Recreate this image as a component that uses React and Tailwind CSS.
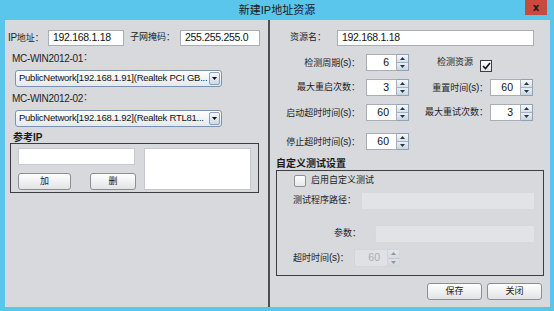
import React from "react";

const FONT = "font-['Liberation_Sans','Noto_Sans_CJK_SC',sans-serif]";

function Up() {
  return (
    <svg width="5" height="3" viewBox="0 0 5 3">
      <path d="M0 3 L2.5 0 L5 3 Z" fill="#2b3440" />
    </svg>
  );
}
function Down({ color = "#2b3440" }) {
  return (
    <svg width="5" height="3" viewBox="0 0 5 3">
      <path d="M0 0 L5 0 L2.5 3 Z" fill={color} />
    </svg>
  );
}

function Input({ className, value, disabled }) {
  return (
    <div
      className={
        "h-full flex items-center pl-[4px] text-[10.5px] tracking-[-0.3px] text-[#111] " +
        (disabled
          ? "bg-[#e1e3e6] border border-[#d6d9dc] "
          : "bg-white border border-[#a7aeb6] ") +
        className
      }
    >
      {value}
    </div>
  );
}

function Spinner({ className, value, disabled }) {
  return (
    <div className={"flex h-[17px] " + className}>
      <div
        className={
          "flex-1 flex items-center justify-end pr-[7px] text-[10.5px] " +
          (disabled
            ? "bg-[#dfe1e4] border border-[#d3d6d9] text-[#a9abae]"
            : "bg-white border border-[#a7aeb6] text-[#111]")
        }
      >
        {value}
      </div>
      <div
        className={
          "w-[12px] flex flex-col border border-l-0 " +
          (disabled ? "border-[#cfd3d7] opacity-40" : "border-[#8ea1b6]")
        }
      >
        <div className="flex-1 flex items-center justify-center bg-gradient-to-b from-[#f6f9fc] to-[#d6e0eb] border-b border-[#a3b3c5]">
          <Up />
        </div>
        <div className="flex-1 flex items-center justify-center bg-gradient-to-b from-[#e9eff6] to-[#c9d6e4]">
          <Down />
        </div>
      </div>
    </div>
  );
}

function Select({ text }) {
  return (
    <div className="ml-[10px] w-[207px] h-[17px] rounded-[3px] border border-[#7c93ad] bg-gradient-to-b from-white to-[#e3e9f0] flex items-center justify-between">
      <span className="pl-[3px] text-[9.5px] tracking-[-0.25px] text-[#111] whitespace-nowrap">
        {text}
      </span>
      <div className="shrink-0 mr-[1px] w-[11px] h-[13px] rounded-[2px] border border-[#8ca0b7] bg-gradient-to-b from-[#f3f6fa] to-[#cfdae6] flex items-center justify-center">
        <Down color="#111" />
      </div>
    </div>
  );
}

function Btn({ className, children }) {
  return (
    <div
      className={
        "h-[17px] rounded-[3px] border border-[#8d8f92] bg-gradient-to-b from-white to-[#e2e3e5] flex items-center justify-center text-[9px] text-[#222] " +
        className
      }
    >
      {children}
    </div>
  );
}

const L = "text-[9px] text-[#1e1e1e] whitespace-nowrap";
const S = ({ children }) => (
  <span className="text-[10px] tracking-[-0.3px]">{children}</span>
);

export default function App() {
  return (
    <div className={"w-[554px] h-[311px] bg-[#5bc6ec] flex flex-col overflow-hidden " + FONT}>
      <div className="h-[20px] relative flex items-center justify-center">
        <span className="text-[11px] text-[#1a1a1a] mt-[1px]">
          新建<span className="text-[11px]">IP</span>地址资源
        </span>
        <div className="absolute right-[7px] top-0 w-[22px] h-[15px] bg-[#c9493f] flex items-center justify-center">
          <span className="text-[10px] font-bold text-[#1b1b1b] leading-none font-['DejaVu_Sans',sans-serif]">x</span>
        </div>
      </div>

      <div className="flex-1 ml-[5px] mr-[4px] mb-[4px] flex bg-[#d7d9dc]">
        {/* left panel */}
        <div className="w-[265px] border-r-2 border-[#4c4e51] pt-[10px] flex flex-col">
          <div className="flex items-center h-[16px]">
            <span className={"ml-[3px] w-[40px] " + L}>
              <S>IP</S>地址：
            </span>
            <Input className="w-[76px]" value="192.168.1.18" />
            <span className={"ml-[6px] w-[50px] " + L}>子网掩码：</span>
            <Input className="w-[80px]" value="255.255.255.0" />
          </div>
          <div className="mt-[6px] h-[12px] ml-[7px] flex items-center text-[10px] tracking-[-0.3px] text-[#1e1e1e]">
            MC-WIN2012-01<span className="text-[9px]">：</span>
          </div>
          <div className="mt-[6px]">
            <Select text="PublicNetwork[192.168.1.91](Realtek PCI GB..." />
          </div>
          <div className="mt-[5px] h-[12px] ml-[7px] flex items-center text-[10px] tracking-[-0.3px] text-[#1e1e1e]">
            MC-WIN2012-02<span className="text-[9px]">：</span>
          </div>
          <div className="mt-[6px]">
            <Select text="PublicNetwork[192.168.1.92](Realtek RTL81..." />
          </div>
          <div className="mt-[4px] h-[12px] ml-[8px] flex items-center text-[10px] font-bold text-[#1a1a1a]">
            参考<span className="text-[10px]">IP</span>
          </div>
          <div className="ml-[5px] w-[249px] h-[50px] border border-[#3d3e40] flex">
            <div className="pl-[7px] pt-[4px] flex flex-col">
              <div className="w-[117px] h-[17px] bg-white border border-[#c5c9cd]" />
              <div className="mt-[8px] flex">
                <Btn className="w-[53px]">加</Btn>
                <Btn className="ml-[19px] w-[46px]">删</Btn>
              </div>
            </div>
            <div className="ml-[8px] mt-[4px] w-[107px] h-[42px] bg-white border border-[#c5c9cd]" />
          </div>
        </div>

        {/* right panel */}
        <div className="flex-1 pt-[10px] flex flex-col">
          <div className="flex items-center h-[16px]">
            <span className={"ml-[20px] w-[47px] " + L}>资源名：</span>
            <Input className="w-[197px]" value="192.168.1.18" />
          </div>
          <div className="mt-[8px] h-[17px] flex items-center">
            <span className={"w-[90px] text-right " + L}>
              检测周期<S>(s)</S>：
            </span>
            <Spinner className="ml-[6px] w-[43px]" value="6" />
            <span className={"ml-[28px] " + L}>检测资源</span>
            <div className="ml-[7px] mt-[6px] w-[12px] h-[12px] border border-[#3b3d40] bg-gradient-to-b from-white to-[#dbe4ee] flex items-center justify-center">
              <svg width="9" height="8" viewBox="0 0 9 8">
                <path d="M1 4 L3.5 6.5 L8 1" stroke="#111" strokeWidth="1.6" fill="none" />
              </svg>
            </div>
          </div>
          <div className="mt-[8px] h-[17px] flex items-center">
            <span className={"w-[90px] text-right " + L}>最大重启次数：</span>
            <Spinner className="ml-[6px] w-[43px]" value="3" />
            <span className={"w-[79px] text-right " + L}>
              重置时间<S>(s)</S>：
            </span>
            <Spinner className="ml-[2px] w-[43px]" value="60" />
          </div>
          <div className="mt-[8px] h-[17px] flex items-center">
            <span className={"w-[90px] text-right " + L}>
              启动超时时间<S>(s)</S>：
            </span>
            <Spinner className="ml-[6px] w-[43px]" value="60" />
            <span className={"w-[79px] text-right " + L}>最大重试次数：</span>
            <Spinner className="ml-[2px] w-[43px]" value="3" />
          </div>
          <div className="mt-[12px] h-[17px] flex items-center">
            <span className={"w-[90px] text-right " + L}>
              停止超时时间<S>(s)</S>：
            </span>
            <Spinner className="ml-[6px] w-[43px]" value="60" />
          </div>
          <div className="mt-[7px] h-[13px] ml-[6px] flex items-center text-[10px] font-bold text-[#1a1a1a]">
            自定义测试设置
          </div>
          <div className="ml-[6px] w-[268px] h-[106px] border border-[#3d3e40] flex flex-col">
            <div className="mt-[4px] h-[12px] flex items-center">
              <div className="ml-[17px] w-[12px] h-[12px] rounded-[2px] border border-[#8e9195] bg-gradient-to-b from-white to-[#e4e6e9]" />
              <span className={"ml-[5px] " + L}>启用自定义测试</span>
            </div>
            <div className="mt-[5px] h-[18px] flex items-center">
              <span className={"ml-[16px] w-[68px] " + L}>测试程序路径：</span>
              <Input className="w-[174px]" value="" disabled />
            </div>
            <div className="mt-[15px] h-[18px] flex items-center">
              <span className={"ml-[16px] w-[68px] text-right " + L}>参数：</span>
              <Input className="ml-[14px] w-[160px]" value="" disabled />
            </div>
            <div className="mt-[6px] h-[18px] flex items-center">
              <span className={"ml-[16px] w-[61px] " + L}>
                超时时间<S>(s)</S>：
              </span>
              <Spinner className="w-[46px] h-[18px]" value="60" disabled />
            </div>
          </div>
          <div className="mt-[7px] flex justify-end pr-[8px] gap-[5px]">
            <Btn className="w-[55px]">保存</Btn>
            <Btn className="w-[55px]">关闭</Btn>
          </div>
        </div>
      </div>
    </div>
  );
}
